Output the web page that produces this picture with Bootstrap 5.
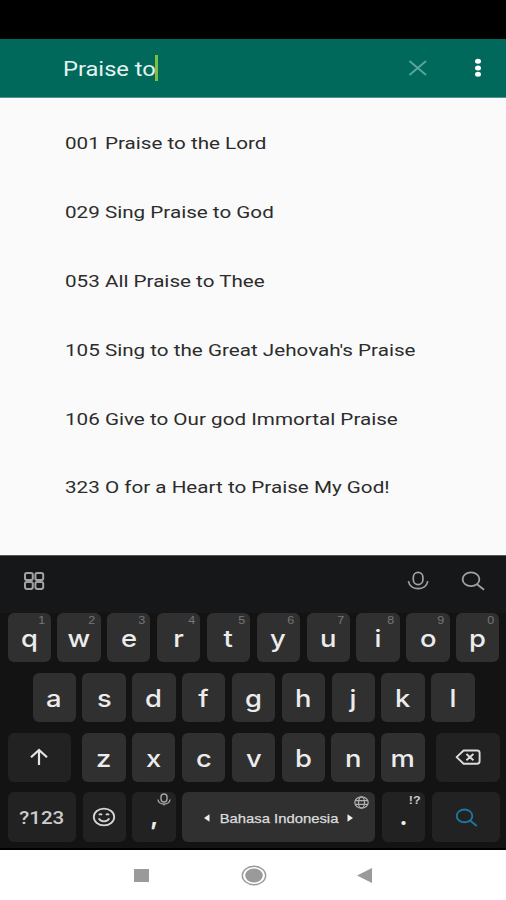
<!DOCTYPE html>
<html lang="en">
<head>
<meta charset="utf-8">
<meta name="viewport" content="width=device-width, initial-scale=1">
<title>Song search</title>
<link href="https://cdn.jsdelivr.net/npm/bootstrap@5.3.0/dist/css/bootstrap.min.css" rel="stylesheet">
<style>
body{font-family:Roboto,"Liberation Sans",sans-serif;background:#fafafa;width:506px;height:900px;overflow:hidden}
.status-strip{height:39px;background:#000}
.app-top{height:58.5px;background:#00695c;border-bottom:1px solid #4f948b;padding:1px 23px 0 63px}
.wide{display:inline-block;white-space:nowrap;transform:scaleX(1.214);transform-origin:left center}
.wide-c{display:inline-block;white-space:nowrap;transform:scaleX(1.14)}
.query{font-size:19.5px;color:#e4f3f0;width:92px;line-height:26px;padding-top:4px}
.caret{width:3px;height:26px;background:#7cc043}
.songs{height:457px;padding-top:11px}
.song{height:68.85px;padding:2px 0 0 65px!important;background:transparent;border:0;color:#2c2c2c;font-size:17px}
.kb{height:295px;background:#131314;border-top:1px solid #555;border-bottom:2px solid #000}
.kb-tools{height:57.3px;background:#161718;padding:0 21px 7px 23px}
.kb-rows{padding:0 6.3px 0 7.5px;gap:10.5px}
.kb-row{gap:6.55px;height:49.4px}
.key{width:43.3px;flex:none;border-radius:6px;background:#303030;color:#ececec;font:450 24px/1 Inter,Roboto,sans-serif;padding-top:4px}
.key-alt{background:#222223;padding-top:0}
.hint{position:absolute;top:2px;right:6px;font:400 10px/11px "Liberation Sans",sans-serif;color:#777;transform:scaleX(1.25)}
.hint-light{color:#ccc;font-weight:600;top:3px}
.w-shift{width:63.3px;margin-right:4.9px}
.w-del{width:63.3px;margin-left:5.3px}
.w-num{width:68.6px}
.w-space{width:193px;padding-top:2px}
.num-label{font:500 18px/1 Roboto,sans-serif;color:#ccc;padding-top:2px}
.lang{font:500 13px/1 "Liberation Sans",sans-serif;color:#ddd;-webkit-text-stroke:.25px #ddd}
.nav-bottom{height:50.5px;background:#fff;padding:2px 0 0 134px}
svg{display:block;flex:none;fill:none}
</style>
<script src="https://cdn.jsdelivr.net/npm/bootstrap@5.3.0/dist/js/bootstrap.bundle.min.js"></script>
</head>
<body class="d-flex flex-column">
<div class="status-strip flex-shrink-0"></div>
<header class="app-top d-flex align-items-center flex-shrink-0">
  <div class="query"><span class="wide">Praise to</span></div>
  <div class="caret"></div>
  <svg class="ms-auto" width="20" height="18" viewBox="0 0 20 18" stroke="#5aa69b" stroke-width="1.9"><path d="M1.5 2 18 16M18 2 1.5 16"/></svg>
  <svg style="margin-left:45px" width="10" height="20" viewBox="0 0 10 20"><g fill="#fff"><ellipse cx="5" cy="3.3" rx="3" ry="2.5"/><ellipse cx="5" cy="9.9" rx="3" ry="2.5"/><ellipse cx="5" cy="16.3" rx="3" ry="2.5"/></g></svg>
</header>
<main class="songs list-group list-group-flush flex-shrink-0">
  <div class="song list-group-item d-flex align-items-center"><span class="wide">001 Praise to the Lord</span></div>
  <div class="song list-group-item d-flex align-items-center"><span class="wide">029 Sing Praise to God</span></div>
  <div class="song list-group-item d-flex align-items-center"><span class="wide">053 All Praise to Thee</span></div>
  <div class="song list-group-item d-flex align-items-center"><span class="wide">105 Sing to the Great Jehovah's Praise</span></div>
  <div class="song list-group-item d-flex align-items-center"><span class="wide">106 Give to Our god Immortal Praise</span></div>
  <div class="song list-group-item d-flex align-items-center"><span class="wide">323 O for a Heart to Praise My God!</span></div>
</main>
<section class="kb flex-shrink-0">
  <div class="kb-tools d-flex align-items-center">
    <svg width="22" height="18" viewBox="0 0 22 18" stroke="#a2a2a4" stroke-width="2"><rect x="2" y="1" width="7.8" height="7" rx="1.8"/><rect x="12.4" y="1" width="7.8" height="7" rx="1.8"/><rect x="2" y="9.9" width="7.8" height="7" rx="1.8"/><rect x="12.4" y="9.9" width="7.8" height="7" rx="1.8"/></svg>
    <svg class="ms-auto" width="22" height="20" viewBox="0 0 22 20" stroke="#a2a2a4" stroke-width="1.7"><rect x="6.3" y="1.4" width="9.6" height="12.2" rx="4.8"/><path d="M1.4 10.2C3.2 20.2 19 20.2 20.8 10.2"/></svg>
    <svg style="margin-left:32px" width="24" height="20" viewBox="0 0 24 20" stroke="#a2a2a4" stroke-width="1.8"><ellipse cx="10" cy="8.3" rx="8.4" ry="6.9"/><path d="m16 13.3 7 5.4"/></svg>
  </div>
  <div class="kb-rows d-flex flex-column">
    <div class="kb-row d-flex">
      <div class="key position-relative d-flex align-items-center justify-content-center"><span class="wide-c">q</span><span class="hint">1</span></div>
      <div class="key position-relative d-flex align-items-center justify-content-center"><span class="wide-c">w</span><span class="hint">2</span></div>
      <div class="key position-relative d-flex align-items-center justify-content-center"><span class="wide-c">e</span><span class="hint">3</span></div>
      <div class="key position-relative d-flex align-items-center justify-content-center"><span class="wide-c">r</span><span class="hint">4</span></div>
      <div class="key position-relative d-flex align-items-center justify-content-center"><span class="wide-c">t</span><span class="hint">5</span></div>
      <div class="key position-relative d-flex align-items-center justify-content-center"><span class="wide-c">y</span><span class="hint">6</span></div>
      <div class="key position-relative d-flex align-items-center justify-content-center"><span class="wide-c">u</span><span class="hint">7</span></div>
      <div class="key position-relative d-flex align-items-center justify-content-center"><span class="wide-c">i</span><span class="hint">8</span></div>
      <div class="key position-relative d-flex align-items-center justify-content-center"><span class="wide-c">o</span><span class="hint">9</span></div>
      <div class="key position-relative d-flex align-items-center justify-content-center"><span class="wide-c">p</span><span class="hint">0</span></div>
    </div>
    <div class="kb-row d-flex justify-content-center">
      <div class="key d-flex align-items-center justify-content-center"><span class="wide-c">a</span></div>
      <div class="key d-flex align-items-center justify-content-center"><span class="wide-c">s</span></div>
      <div class="key d-flex align-items-center justify-content-center"><span class="wide-c">d</span></div>
      <div class="key d-flex align-items-center justify-content-center"><span class="wide-c">f</span></div>
      <div class="key d-flex align-items-center justify-content-center"><span class="wide-c">g</span></div>
      <div class="key d-flex align-items-center justify-content-center"><span class="wide-c">h</span></div>
      <div class="key d-flex align-items-center justify-content-center"><span class="wide-c">j</span></div>
      <div class="key d-flex align-items-center justify-content-center"><span class="wide-c">k</span></div>
      <div class="key d-flex align-items-center justify-content-center"><span class="wide-c">l</span></div>
    </div>
    <div class="kb-row d-flex">
      <div class="key key-alt w-shift d-flex align-items-center justify-content-center">
        <svg width="20" height="18" viewBox="0 0 20 18" stroke="#e4e4e4" stroke-width="2.2"><path d="M10 17V2.2M2 9.2l8-7.2 8 7.2"/></svg>
      </div>
      <div class="key d-flex align-items-center justify-content-center"><span class="wide-c">z</span></div>
      <div class="key d-flex align-items-center justify-content-center"><span class="wide-c">x</span></div>
      <div class="key d-flex align-items-center justify-content-center"><span class="wide-c">c</span></div>
      <div class="key d-flex align-items-center justify-content-center"><span class="wide-c">v</span></div>
      <div class="key d-flex align-items-center justify-content-center"><span class="wide-c">b</span></div>
      <div class="key d-flex align-items-center justify-content-center"><span class="wide-c">n</span></div>
      <div class="key d-flex align-items-center justify-content-center"><span class="wide-c">m</span></div>
      <div class="key key-alt w-del d-flex align-items-center justify-content-center">
        <svg width="26" height="17" viewBox="0 0 26 17" stroke="#dcdcdc" stroke-width="1.9" stroke-linejoin="round"><path d="M8.6 1.5H22a2.6 2.4 0 0 1 2.6 2.4v8.4A2.6 2.4 0 0 1 22 14.7H8.6L1.6 8.1zM11.4 5l7 6.2M18.4 5l-7 6.2"/></svg>
      </div>
    </div>
    <div class="kb-row d-flex">
      <div class="key key-alt w-num d-flex align-items-center justify-content-center"><span class="wide-c num-label">?123</span></div>
      <div class="key key-alt d-flex align-items-center justify-content-center">
        <svg width="24" height="20" viewBox="0 0 24 20" stroke="#d6d6d6" stroke-width="1.8"><ellipse cx="12" cy="10" rx="10.2" ry="8.4"/><path d="M6.8 11.4c1.7 3.9 8.7 3.9 10.4 0" stroke-width="1.8"/><path d="M7 8.1q1.5-2 3 0M14 8.1q1.5-2 3 0" stroke-width="1.6"/></svg>
      </div>
      <div class="key key-alt position-relative d-flex align-items-center justify-content-center"><span class="fw-bold">,</span>
        <svg class="position-absolute" style="top:1px;right:5px" width="14" height="13" viewBox="0 0 14 13" stroke="#a5a5a5" stroke-width="1.4"><rect x="4" y="1" width="6" height="8" rx="3"/><path d="M.9 6.5c1 6 11.2 6 12.2 0M7 11v1.6"/></svg>
      </div>
      <div class="key w-space position-relative d-flex align-items-center justify-content-center">
        <svg width="6" height="8" viewBox="0 0 6 8"><path d="M0 4 5.5.3v7.4z" fill="#eee"/></svg>
        <span class="lang text-center" style="width:137px"><span class="wide-c">Bahasa Indonesia</span></span>
        <svg width="6" height="8" viewBox="0 0 6 8"><path d="M6 4 .5.3v7.4z" fill="#eee"/></svg>
        <svg class="position-absolute" style="top:4px;right:6px" width="15" height="13" viewBox="0 0 15 13" stroke="#b2b2b2" stroke-width="1.2"><ellipse cx="7.5" cy="6.5" rx="6.7" ry="5.7"/><ellipse cx="7.5" cy="6.5" rx="3" ry="5.7"/><path d="M1.4 4.6h12.2M1.4 8.4h12.2"/></svg>
      </div>
      <div class="key key-alt position-relative d-flex align-items-center justify-content-center"><span class="fw-bold">.</span><span class="hint hint-light">!?</span></div>
      <div class="key key-alt w-num d-flex align-items-center justify-content-center">
        <svg width="23" height="19" viewBox="0 0 23 19" stroke="#20759e" stroke-width="1.9"><ellipse cx="9.5" cy="7.9" rx="7.8" ry="6.4"/><path d="m15 12.5 6.8 5.4"/></svg>
      </div>
    </div>
  </div>
</section>
<nav class="nav-bottom d-flex align-items-center">
  <svg width="15" height="13" viewBox="0 0 15 13"><path d="M0 0h15v13H0z" fill="#9a9a9a"/></svg>
  <svg style="margin-left:92px" width="26" height="21" viewBox="0 0 26 21"><ellipse cx="13" cy="10.5" rx="11.7" ry="9.3" stroke="#9a9a9a" stroke-width="1.4"/><ellipse cx="13" cy="10.5" rx="8.8" ry="7" fill="#9a9a9a"/></svg>
  <svg style="margin-left:90px" width="15" height="15" viewBox="0 0 15 15"><path d="M0 7.5 15 0v15z" fill="#9a9a9a"/></svg>
</nav>
</body>
</html>
